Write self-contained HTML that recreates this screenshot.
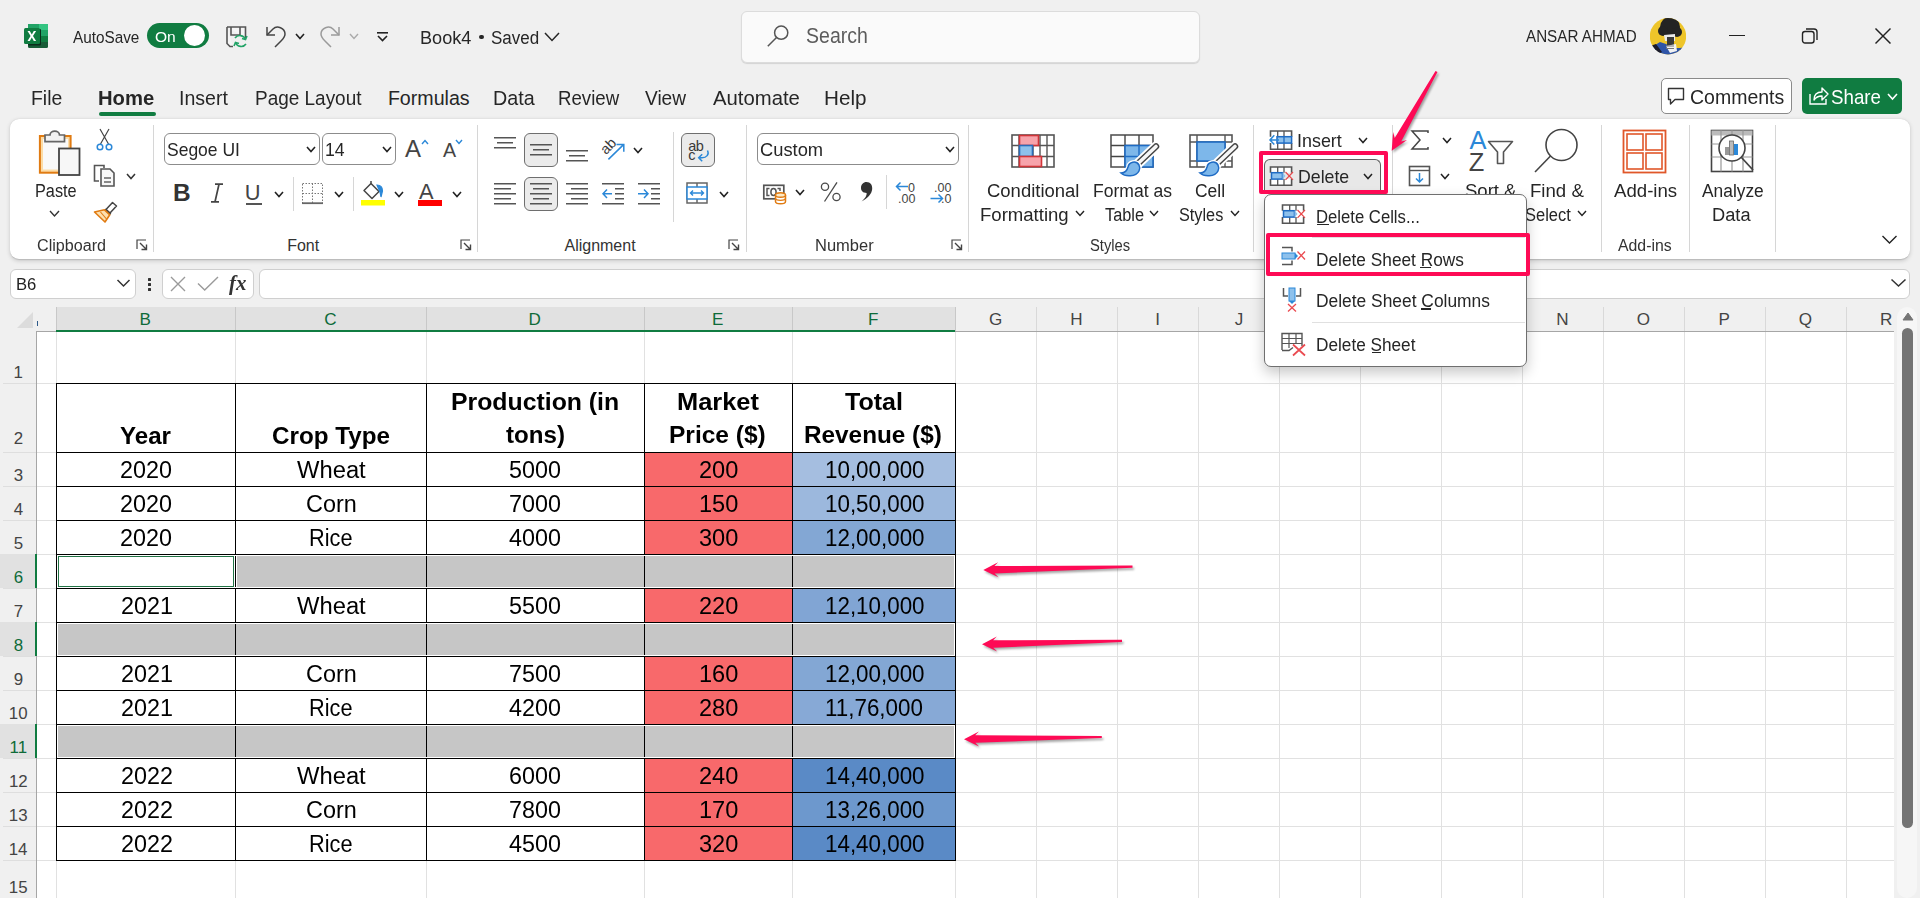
<!DOCTYPE html><html><head><meta charset="utf-8"><style>
html,body{margin:0;padding:0}
body{width:1920px;height:898px;overflow:hidden;position:relative;background:#f0f0f0;font-family:"Liberation Sans", sans-serif}
.t{position:absolute;white-space:nowrap;line-height:1;}
svg{display:block}
</style></head><body>
<svg style="position:absolute;left:23px;top:23px;overflow:visible" width="27" height="26" viewBox="0 0 27 26">
<rect x="5" y="1" width="20" height="24" rx="1.5" fill="#185c37"/>
<rect x="16" y="1" width="9" height="6" fill="#33c481"/>
<rect x="5" y="1" width="11" height="6" fill="#21a366"/>
<rect x="16" y="7" width="9" height="6" fill="#21a366"/>
<rect x="16" y="13" width="9" height="6" fill="#107c41"/>
<rect x="5" y="7" width="11" height="12" fill="#107c41"/>
<rect x="5" y="6" width="13" height="16.5" rx="1" fill="#0b2d1c"/>
<rect x="1" y="5" width="16" height="16" rx="1.5" fill="#107c41"/>
<path d="M4.5,8 L7.6,13 L4.5,18 L6.8,18 L8.8,14.6 L10.8,18 L13.1,18 L10,13 L13.1,8 L10.8,8 L8.8,11.4 L6.8,8 Z" fill="#fff"/>
</svg>
<div class="t" style="left:73.26px;top:29.11px;font-size:16.29px;letter-spacing:0.000px;color:#262626;transform:scaleX(0.9401);transform-origin:0 0;">AutoSave</div>
<div style="position:absolute;left:147px;top:23px;width:62px;height:25px;background:#107c41;border-radius:13px"></div>
<div style="position:absolute;left:183.5px;top:25px;width:21px;height:21px;background:#fff;border-radius:50%"></div>
<div class="t" style="left:154.76px;top:28.77px;font-size:15.27px;letter-spacing:0.000px;color:#fff;transform:scaleX(1.0197);transform-origin:0 0;">On</div>
<svg style="position:absolute;left:226px;top:26px;overflow:visible" width="24" height="23" viewBox="0 0 24 23">
<path d="M1,1 H19.5 V12 M1,1 V17.5 L4,20.5 H7" fill="#f5f5f5" stroke="#555" stroke-width="1.6"/>
<path d="M5,1 V9 H14 V1" fill="none" stroke="#555" stroke-width="1.6"/>
<path d="M19.5,13.5 a6,6 0 0 0 -10.5,-1.5" fill="none" stroke="#21a366" stroke-width="1.6"/>
<path d="M21,10 l-1.5,3.5 l-3.5,-1" fill="none" stroke="#21a366" stroke-width="1.6"/>
<path d="M9.5,16.5 a6,6 0 0 0 10.5,1.5" fill="none" stroke="#21a366" stroke-width="1.6"/>
<path d="M8,20 l1.5,-3.5 l3.5,1" fill="none" stroke="#21a366" stroke-width="1.6"/>
</svg>
<svg style="position:absolute;left:265px;top:25px;overflow:visible" width="22" height="24" viewBox="0 0 22 24">
<path d="M2,2 V10 H10" fill="none" stroke="#444" stroke-width="1.5"/>
<path d="M2,10 L8,4 C12,0 20,3 20,9 C20,12 18,14 16,16 L10,22" fill="none" stroke="#444" stroke-width="1.5"/>
</svg>
<svg style="position:absolute;left:294.2px;top:32.25px;overflow:visible" width="12" height="8.5" viewBox="0 0 12 8.5"><polyline points="2,2 6.0,6.5 10,2" fill="none" stroke="#222" stroke-width="1.6"/></svg>
<svg style="position:absolute;left:319px;top:25px;overflow:visible" width="22" height="24" viewBox="0 0 22 24">
<path d="M20,2 V10 H12" fill="none" stroke="#9a9a9a" stroke-width="1.5"/>
<path d="M20,10 L14,4 C10,0 2,3 2,9 C2,12 4,14 6,16 L12,22" fill="none" stroke="#9a9a9a" stroke-width="1.5"/>
</svg>
<svg style="position:absolute;left:348.2px;top:32.25px;overflow:visible" width="12" height="8.5" viewBox="0 0 12 8.5"><polyline points="2,2 6.0,6.5 10,2" fill="none" stroke="#aaa" stroke-width="1.4"/></svg>
<svg style="position:absolute;left:376px;top:31px;overflow:visible" width="13" height="11" viewBox="0 0 13 11">
<rect x="1" y="1" width="11" height="1.6" fill="#222"/>
<polyline points="2,5 6.5,9.5 11,5" fill="none" stroke="#222" stroke-width="1.6"/>
</svg>
<div class="t" style="left:420.30px;top:28.34px;font-size:19.20px;letter-spacing:0.000px;color:#262626;transform:scaleX(0.9442);transform-origin:0 0;">Book4</div>
<div style="position:absolute;left:479.2px;top:34.6px;width:4.6px;height:4.6px;background:#262626;border-radius:50%"></div>
<div class="t" style="left:490.73px;top:28.34px;font-size:19.20px;letter-spacing:0.000px;color:#262626;transform:scaleX(0.8860);transform-origin:0 0;">Saved</div>
<svg style="position:absolute;left:543.2px;top:30.65px;overflow:visible" width="18" height="11.5" viewBox="0 0 18 11.5"><polyline points="2,2 9.0,9.5 16,2" fill="none" stroke="#262626" stroke-width="1.5"/></svg>
<div style="position:absolute;left:741px;top:11px;width:457px;height:50px;background:#fafafa;border:1px solid #dcdcdc;border-radius:6px;box-shadow:0 1px 1px rgba(0,0,0,0.12)"></div>
<svg style="position:absolute;left:766px;top:24px;overflow:visible" width="24" height="24" viewBox="0 0 24 24">
<circle cx="15.2" cy="8.7" r="6.6" fill="none" stroke="#555" stroke-width="1.5"/>
<line x1="10.5" y1="13.5" x2="1.8" y2="22.3" stroke="#555" stroke-width="1.5"/>
</svg>
<div class="t" style="left:806.02px;top:25.03px;font-size:21.82px;letter-spacing:0.000px;color:#5c5c5c;transform:scaleX(0.8949);transform-origin:0 0;">Search</div>
<div class="t" style="left:1525.66px;top:28.71px;font-size:16.87px;letter-spacing:0.000px;color:#262626;transform:scaleX(0.9017);transform-origin:0 0;">ANSAR AHMAD</div>
<svg style="position:absolute;left:1650px;top:17.5px" width="36" height="37" viewBox="0 0 36 37">
<defs><clipPath id="av"><circle cx="18" cy="18.3" r="18.2"/></clipPath></defs>
<g clip-path="url(#av)">
<rect width="36" height="37" fill="#eec52a"/>
<path d="M0,30 L10,24 L16,26 L22,30 L30,30 L36,29 V37 H0 Z" fill="#2f55a8"/>
<path d="M0,28 L6,26 L12,34 L8,37 H0 Z" fill="#1c1c2a"/>
<circle cx="20" cy="9" r="10" fill="#232323"/>
<circle cx="13" cy="13" r="5" fill="#232323"/>
<circle cx="27" cy="14" r="5" fill="#232323"/>
<path d="M14,17 L25,16 L25,23 L15,23 Z" fill="#e9e9e9"/>
<rect x="17" y="19" width="7" height="9" fill="#3a3a3a"/>
<path d="M16,28 L26,26 L27,33 L20,35 Z" fill="#f2f2f2"/>
<path d="M16,28 L24,28 M16,30.5 L24,30.5" stroke="#777" stroke-width="1"/>
</g></svg>
<div style="position:absolute;left:1729px;top:34.5px;width:15.5px;height:1.8px;background:#222"></div>
<svg style="position:absolute;left:1801px;top:27px;overflow:visible" width="18" height="18" viewBox="0 0 18 18">
<rect x="1.5" y="4.5" width="11.5" height="11.5" rx="2.5" fill="none" stroke="#222" stroke-width="1.4"/>
<path d="M5,2 H13 a3,3 0 0 1 3,3 V13" fill="none" stroke="#222" stroke-width="1.4"/>
</svg>
<svg style="position:absolute;left:1874px;top:27px;overflow:visible" width="18" height="18" viewBox="0 0 18 18">
<line x1="1.5" y1="1.5" x2="16.5" y2="16.5" stroke="#222" stroke-width="1.5"/>
<line x1="16.5" y1="1.5" x2="1.5" y2="16.5" stroke="#222" stroke-width="1.5"/>
</svg>
<div class="t" style="left:31.30px;top:89.07px;font-size:19.64px;letter-spacing:0.000px;color:#262626;transform:scaleX(0.9877);transform-origin:0 0;">File</div>
<div class="t" style="left:98.43px;top:89.07px;font-size:19.64px;letter-spacing:0.000px;color:#262626;font-weight:bold;transform:scaleX(1.0309);transform-origin:0 0;">Home</div>
<div class="t" style="left:178.59px;top:89.07px;font-size:19.64px;letter-spacing:0.000px;color:#262626;transform:scaleX(0.9952);transform-origin:0 0;">Insert</div>
<div class="t" style="left:255.34px;top:89.07px;font-size:19.64px;letter-spacing:0.000px;color:#262626;transform:scaleX(0.9660);transform-origin:0 0;">Page Layout</div>
<div class="t" style="left:387.88px;top:89.07px;font-size:19.64px;letter-spacing:0.000px;color:#262626;">Formulas</div>
<div class="t" style="left:492.67px;top:89.07px;font-size:19.64px;letter-spacing:0.000px;color:#262626;transform:scaleX(1.0047);transform-origin:0 0;">Data</div>
<div class="t" style="left:557.76px;top:89.07px;font-size:19.64px;letter-spacing:0.000px;color:#262626;transform:scaleX(0.9501);transform-origin:0 0;">Review</div>
<div class="t" style="left:644.90px;top:89.07px;font-size:19.64px;letter-spacing:0.000px;color:#262626;transform:scaleX(0.9723);transform-origin:0 0;">View</div>
<div class="t" style="left:712.65px;top:89.07px;font-size:19.64px;letter-spacing:0.000px;color:#262626;transform:scaleX(1.0342);transform-origin:0 0;">Automate</div>
<div class="t" style="left:823.59px;top:89.07px;font-size:19.64px;letter-spacing:0.000px;color:#262626;transform:scaleX(1.0541);transform-origin:0 0;">Help</div>
<div style="position:absolute;left:99px;top:112px;width:57px;height:3.5px;background:#107c41;border-radius:2px"></div>
<div style="position:absolute;left:1661px;top:78px;width:131px;height:36px;background:#fff;border:1px solid #8a8a8a;border-radius:5px;box-sizing:border-box"></div>
<svg style="position:absolute;left:1667px;top:87px;overflow:visible" width="20" height="19" viewBox="0 0 20 19">
<path d="M1.5,1.5 H16.5 V12.5 H8 L3.5,17 V12.5 H1.5 Z" fill="none" stroke="#333" stroke-width="1.4" stroke-linejoin="round"/>
</svg>
<div class="t" style="left:1689.73px;top:87.39px;font-size:20.80px;letter-spacing:0.000px;color:#262626;transform:scaleX(0.9372);transform-origin:0 0;">Comments</div>
<div style="position:absolute;left:1802px;top:78px;width:100px;height:36px;background:#107c41;border-radius:5px"></div>
<svg style="position:absolute;left:1808px;top:85px;overflow:visible" width="22" height="22" viewBox="0 0 22 22">
<path d="M2,9 V19 H18 V14" fill="none" stroke="#fff" stroke-width="1.4"/>
<path d="M6,15 C6,9 9,7 14,7 V3 L20,9 L14,15 V11 C10,11 8,12 6,15 Z" fill="none" stroke="#fff" stroke-width="1.4" stroke-linejoin="round"/>
</svg>
<div class="t" style="left:1830.86px;top:87.39px;font-size:20.80px;letter-spacing:0.000px;color:#fff;transform:scaleX(0.9000);transform-origin:0 0;">Share</div>
<svg style="position:absolute;left:1885.5px;top:92.0px;overflow:visible" width="13" height="9" viewBox="0 0 13 9"><polyline points="2,2 6.5,7 11,2" fill="none" stroke="#fff" stroke-width="1.6"/></svg>
<div style="position:absolute;left:10px;top:119px;width:1900px;height:140px;background:#fff;border-radius:9px;box-shadow:0 1.5px 4px rgba(0,0,0,0.16),0 0.5px 1px rgba(0,0,0,0.12)"></div>
<svg style="position:absolute;left:37px;top:129px;overflow:visible" width="44" height="48" viewBox="0 0 44 48">
<rect x="2.9" y="7" width="30.7" height="36.7" fill="#fcdca6" stroke="#e07b12" stroke-width="2"/>
<rect x="6" y="10" width="25" height="30.5" fill="#f9f9f9"/>
<path d="M8,12.7 V6 H13 C13,0.8 22.5,0.8 22.5,6 H27.5 V12.7 Z" fill="#f2f2f2" stroke="#666" stroke-width="1.7"/>
<rect x="22" y="19.5" width="20.5" height="26.5" fill="#f7f7f7" stroke="#444" stroke-width="1.8"/>
</svg>
<div class="t" style="left:34.66px;top:182.43px;font-size:18.04px;letter-spacing:0.000px;color:#262626;transform:scaleX(0.9012);transform-origin:0 0;">Paste</div>
<svg style="position:absolute;left:47.8px;top:209.0px;overflow:visible" width="13" height="9" viewBox="0 0 13 9"><polyline points="2,2 6.5,7 11,2" fill="none" stroke="#333" stroke-width="1.4"/></svg>
<svg style="position:absolute;left:95px;top:128px;overflow:visible" width="20" height="24" viewBox="0 0 20 24">
<path d="M5,1 L13.5,16 M14,1 L5.5,16" stroke="#444" stroke-width="1.2" fill="none"/>
<circle cx="5" cy="19" r="2.8" fill="none" stroke="#2b88d8" stroke-width="1.5"/>
<circle cx="14" cy="19" r="2.8" fill="none" stroke="#2b88d8" stroke-width="1.5"/>
</svg>
<svg style="position:absolute;left:93px;top:164px;overflow:visible" width="24" height="24" viewBox="0 0 24 24">
<path d="M7,1.5 H1.5 V17 H6" fill="none" stroke="#555" stroke-width="1.6"/>
<path d="M7,1.5 H11 V4" fill="none" stroke="#555" stroke-width="1.6"/>
<path d="M8,5 H17 L21,9 V22 H8 Z" fill="#f7f7f7" stroke="#555" stroke-width="1.6"/>
<path d="M11,14 H18 M11,18 H18" stroke="#666" stroke-width="1.3"/>
</svg>
<svg style="position:absolute;left:125.19999999999999px;top:172.25px;overflow:visible" width="12" height="8.5" viewBox="0 0 12 8.5"><polyline points="2,2 6.0,6.5 10,2" fill="none" stroke="#333" stroke-width="1.5"/></svg>
<svg style="position:absolute;left:93px;top:201px;overflow:visible" width="25" height="22" viewBox="0 0 25 22">
<path d="M19.5,1.5 L23.5,5 L17,12 L13,8.5 Z" fill="#fff" stroke="#444" stroke-width="1.5" stroke-linejoin="round"/>
<path d="M12,8.5 L17.5,13.5" stroke="#444" stroke-width="2.4"/>
<path d="M1.5,11 L11.5,8.8 L16.8,13.8 L12,21 Z" fill="#fde0b0" stroke="#e07b12" stroke-width="1.6" stroke-linejoin="round"/>
<path d="M7.5,11 L13.5,18" stroke="#e07b12" stroke-width="1.1"/>
</svg>
<div class="t" style="left:37.49px;top:238.15px;font-size:16.00px;letter-spacing:0.000px;color:#333;transform:scaleX(1.0078);transform-origin:0 0;">Clipboard</div>
<svg style="position:absolute;left:136px;top:239px;overflow:visible" width="12" height="12" viewBox="0 0 12 12"><path d="M1,10 V1 H10" fill="none" stroke="#444" stroke-width="1.2"/>
<path d="M4,4 L10.5,10.5 M5.5,10.5 H10.5 V5.5" fill="none" stroke="#444" stroke-width="1.4"/></svg>
<div style="position:absolute;left:153px;top:125px;width:1px;height:127px;background:#d6d6d6"></div>
<div style="position:absolute;left:164px;top:133px;width:156px;height:32px;border:1px solid #8c8c8c;border-radius:6px;box-sizing:border-box;background:#fff"></div>
<div class="t" style="left:166.71px;top:140.69px;font-size:18.91px;letter-spacing:0.000px;color:#262626;transform:scaleX(0.9246);transform-origin:0 0;">Segoe UI</div>
<svg style="position:absolute;left:305.0px;top:145.05px;overflow:visible" width="12" height="8.5" viewBox="0 0 12 8.5"><polyline points="2,2 6.0,6.5 10,2" fill="none" stroke="#222" stroke-width="1.6"/></svg>
<div style="position:absolute;left:322px;top:133px;width:74px;height:32px;border:1px solid #8c8c8c;border-radius:6px;box-sizing:border-box;background:#fff"></div>
<div class="t" style="left:324.87px;top:141.18px;font-size:18.33px;letter-spacing:0.000px;color:#262626;transform:scaleX(0.9640);transform-origin:0 0;">14</div>
<svg style="position:absolute;left:381.3px;top:145.05px;overflow:visible" width="12" height="8.5" viewBox="0 0 12 8.5"><polyline points="2,2 6.0,6.5 10,2" fill="none" stroke="#222" stroke-width="1.6"/></svg>
<div class="t" style="left:404.94px;top:137.38px;font-size:24.00px;letter-spacing:0.000px;color:#444;">A</div>
<svg style="position:absolute;left:421px;top:139px;overflow:visible" width="8" height="6" viewBox="0 0 8 6"><polyline points="1,5 4,1.5 7,5" fill="none" stroke="#2b88d8" stroke-width="1.4"/></svg>
<div class="t" style="left:442.95px;top:141.07px;font-size:19.64px;letter-spacing:0.000px;color:#444;">A</div>
<svg style="position:absolute;left:455px;top:139px;overflow:visible" width="8" height="6" viewBox="0 0 8 6"><polyline points="1,1 4,4.5 7,1" fill="none" stroke="#2b88d8" stroke-width="1.4"/></svg>
<div class="t" style="left:173.05px;top:181.01px;font-size:24.44px;letter-spacing:0.000px;color:#333;font-weight:bold;">B</div>
<svg style="position:absolute;left:209px;top:183px;overflow:visible" width="16" height="20" viewBox="0 0 16 20"><path d="M6,1.2 H14 M2,18.8 H10 M10,1.2 L6,18.8" fill="none" stroke="#444" stroke-width="1.7"/></svg>
<div class="t" style="left:244.81px;top:181.73px;font-size:21.82px;letter-spacing:0.000px;color:#444;">U</div>
<div style="position:absolute;left:245.5px;top:203px;width:16px;height:1.6px;background:#555"></div>
<svg style="position:absolute;left:273.0px;top:190.25px;overflow:visible" width="12" height="8.5" viewBox="0 0 12 8.5"><polyline points="2,2 6.0,6.5 10,2" fill="none" stroke="#222" stroke-width="1.6"/></svg>
<div style="position:absolute;left:293px;top:177px;width:1px;height:34px;background:#d6d6d6"></div>
<svg style="position:absolute;left:301px;top:182px;overflow:visible" width="23" height="23" viewBox="0 0 23 23">
<path d="M1.5,1.5 H21.5 V21.5 H1.5 Z M11.5,1.5 V21.5 M1.5,11.5 H21.5" fill="none" stroke="#777" stroke-width="1" stroke-dasharray="1.5,1.5"/>
<path d="M1,21.2 H22" stroke="#666" stroke-width="1.8"/>
</svg>
<svg style="position:absolute;left:333.0px;top:190.25px;overflow:visible" width="12" height="8.5" viewBox="0 0 12 8.5"><polyline points="2,2 6.0,6.5 10,2" fill="none" stroke="#222" stroke-width="1.6"/></svg>
<div style="position:absolute;left:353px;top:177px;width:1px;height:34px;background:#d6d6d6"></div>
<svg style="position:absolute;left:360px;top:180px;overflow:visible" width="28" height="28" viewBox="0 0 28 28">
<path d="M4,10.5 L11,3.5 L19,11.5 L12,18.5 Z" fill="#fff" stroke="#444" stroke-width="1.5" stroke-linejoin="round"/>
<path d="M11,3.5 V1" stroke="#444" stroke-width="1.5"/>
<path d="M17,5 C21,5 22.5,8 22.5,11 L21,17 L20,12 Z" fill="#2b88d8" stroke="#2b88d8" stroke-width="1.2"/>
<rect x="1" y="20" width="24" height="5.5" fill="#ffff00"/>
</svg>
<svg style="position:absolute;left:393.0px;top:190.25px;overflow:visible" width="12" height="8.5" viewBox="0 0 12 8.5"><polyline points="2,2 6.0,6.5 10,2" fill="none" stroke="#222" stroke-width="1.6"/></svg>
<div class="t" style="left:418.95px;top:180.73px;font-size:21.82px;letter-spacing:0.000px;color:#444;">A</div>
<div style="position:absolute;left:418px;top:200px;width:24px;height:5.5px;background:#ff0000"></div>
<svg style="position:absolute;left:450.5px;top:190.25px;overflow:visible" width="12" height="8.5" viewBox="0 0 12 8.5"><polyline points="2,2 6.0,6.5 10,2" fill="none" stroke="#222" stroke-width="1.6"/></svg>
<div class="t" style="left:287.18px;top:238.15px;font-size:16.00px;letter-spacing:0.000px;color:#333;">Font</div>
<svg style="position:absolute;left:460px;top:239px;overflow:visible" width="12" height="12" viewBox="0 0 12 12"><path d="M1,10 V1 H10" fill="none" stroke="#444" stroke-width="1.2"/>
<path d="M4,4 L10.5,10.5 M5.5,10.5 H10.5 V5.5" fill="none" stroke="#444" stroke-width="1.4"/></svg>
<div style="position:absolute;left:477px;top:125px;width:1px;height:127px;background:#d6d6d6"></div>
<svg style="position:absolute;left:494px;top:137px;overflow:visible" width="24" height="24" viewBox="0 0 24 24"><rect x="0" y="0" width="22" height="1.5" fill="#555"/><rect x="3" y="5" width="16" height="1.5" fill="#555"/><rect x="0" y="10" width="22" height="1.5" fill="#555"/></svg>
<div style="position:absolute;left:524px;top:133px;width:34px;height:34px;background:#ebebeb;border:1px solid #6e6e6e;border-radius:6px;box-sizing:border-box"></div>
<svg style="position:absolute;left:530px;top:144px;overflow:visible" width="24" height="24" viewBox="0 0 24 24"><rect x="0" y="0" width="22" height="1.5" fill="#555"/><rect x="3" y="5" width="16" height="1.5" fill="#555"/><rect x="0" y="10" width="22" height="1.5" fill="#555"/></svg>
<svg style="position:absolute;left:566px;top:150px;overflow:visible" width="24" height="24" viewBox="0 0 24 24"><rect x="0" y="0" width="22" height="1.5" fill="#555"/><rect x="3" y="5" width="16" height="1.5" fill="#555"/><rect x="0" y="10" width="22" height="1.5" fill="#555"/></svg>
<svg style="position:absolute;left:600px;top:136px;overflow:visible" width="28" height="28" viewBox="0 0 28 28">
<text x="0" y="15" transform="rotate(-45 8 10)" font-family="Liberation Sans" font-size="14.5" fill="#3a3a3a">ab</text>
<path d="M8.4,23.4 L23.8,8.4 M16.5,8.4 H23.8 V15.7" fill="none" stroke="#2b88d8" stroke-width="1.5"/>
</svg>
<svg style="position:absolute;left:631.5px;top:146.25px;overflow:visible" width="12" height="8.5" viewBox="0 0 12 8.5"><polyline points="2,2 6.0,6.5 10,2" fill="none" stroke="#222" stroke-width="1.6"/></svg>
<svg style="position:absolute;left:494px;top:183px;overflow:visible" width="24" height="24" viewBox="0 0 24 24"><rect x="0" y="0" width="22" height="1.5" fill="#555"/><rect x="0" y="5" width="17" height="1.5" fill="#555"/><rect x="0" y="10" width="22" height="1.5" fill="#555"/><rect x="0" y="15" width="17" height="1.5" fill="#555"/><rect x="0" y="20" width="22" height="1.5" fill="#555"/></svg>
<div style="position:absolute;left:524px;top:177px;width:34px;height:34px;background:#ebebeb;border:1px solid #6e6e6e;border-radius:6px;box-sizing:border-box"></div>
<svg style="position:absolute;left:530px;top:183px;overflow:visible" width="24" height="24" viewBox="0 0 24 24"><rect x="0" y="0" width="22" height="1.5" fill="#555"/><rect x="3" y="5" width="16" height="1.5" fill="#555"/><rect x="0" y="10" width="22" height="1.5" fill="#555"/><rect x="3" y="15" width="16" height="1.5" fill="#555"/><rect x="0" y="20" width="22" height="1.5" fill="#555"/></svg>
<svg style="position:absolute;left:566px;top:183px;overflow:visible" width="24" height="24" viewBox="0 0 24 24"><rect x="0" y="0" width="22" height="1.5" fill="#555"/><rect x="5" y="5" width="17" height="1.5" fill="#555"/><rect x="0" y="10" width="22" height="1.5" fill="#555"/><rect x="5" y="15" width="17" height="1.5" fill="#555"/><rect x="0" y="20" width="22" height="1.5" fill="#555"/></svg>
<svg style="position:absolute;left:602px;top:183px;overflow:visible" width="24" height="24" viewBox="0 0 24 24">
<rect x="0" y="0" width="22" height="1.5" fill="#555"/><rect x="13" y="5" width="9" height="1.5" fill="#555"/>
<rect x="13" y="10" width="9" height="1.5" fill="#555"/><rect x="13" y="15" width="9" height="1.5" fill="#555"/>
<rect x="0" y="20" width="22" height="1.5" fill="#555"/>
<path d="M10,10.7 H1 M5,6.5 L1,10.7 L5,15" fill="none" stroke="#2b88d8" stroke-width="1.5"/>
</svg>
<svg style="position:absolute;left:638px;top:183px;overflow:visible" width="24" height="24" viewBox="0 0 24 24">
<rect x="0" y="0" width="22" height="1.5" fill="#555"/><rect x="13" y="5" width="9" height="1.5" fill="#555"/>
<rect x="13" y="10" width="9" height="1.5" fill="#555"/><rect x="13" y="15" width="9" height="1.5" fill="#555"/>
<rect x="0" y="20" width="22" height="1.5" fill="#555"/>
<path d="M0,10.7 H10 M6,6.5 L10,10.7 L6,15" fill="none" stroke="#2b88d8" stroke-width="1.5"/>
</svg>
<div style="position:absolute;left:673px;top:132px;width:1px;height:90px;background:#d6d6d6"></div>
<div style="position:absolute;left:681px;top:133px;width:34px;height:34px;background:#ebebeb;border:1px solid #6e6e6e;border-radius:6px;box-sizing:border-box"></div>
<svg style="position:absolute;left:686px;top:137px;overflow:visible" width="26" height="28" viewBox="0 0 26 28">
<text x="2.3" y="13.5" font-family="Liberation Sans" font-size="14.5" fill="#3a3a3a" letter-spacing="-0.6">ab</text>
<text x="2.3" y="23" font-family="Liberation Sans" font-size="14.5" fill="#3a3a3a">c</text>
<path d="M21.5,13.5 C23.5,17.5 20.5,20.8 16,20.8 H13 M16.2,17.3 L12.7,20.8 L16.2,24.3" fill="none" stroke="#2b88d8" stroke-width="1.5"/>
</svg>
<svg style="position:absolute;left:686px;top:182px;overflow:visible" width="24" height="24" viewBox="0 0 24 24">
<rect x="1" y="1" width="20" height="20" fill="none" stroke="#666" stroke-width="1.5"/>
<path d="M11,1 V21" stroke="#666" stroke-width="1.5"/>
<rect x="1" y="5" width="20" height="12" fill="#fff" stroke="#2b88d8" stroke-width="1.5"/>
<path d="M4.5,11 H17.5 M7,8.5 L4.5,11 L7,13.5 M15,8.5 L17.5,11 L15,13.5" fill="none" stroke="#2b88d8" stroke-width="1.4"/>
</svg>
<svg style="position:absolute;left:718.0px;top:190.25px;overflow:visible" width="12" height="8.5" viewBox="0 0 12 8.5"><polyline points="2,2 6.0,6.5 10,2" fill="none" stroke="#222" stroke-width="1.6"/></svg>
<div class="t" style="left:564.46px;top:238.15px;font-size:16.00px;letter-spacing:0.000px;color:#333;">Alignment</div>
<svg style="position:absolute;left:728px;top:239px;overflow:visible" width="12" height="12" viewBox="0 0 12 12"><path d="M1,10 V1 H10" fill="none" stroke="#444" stroke-width="1.2"/>
<path d="M4,4 L10.5,10.5 M5.5,10.5 H10.5 V5.5" fill="none" stroke="#444" stroke-width="1.4"/></svg>
<div style="position:absolute;left:746px;top:125px;width:1px;height:127px;background:#d6d6d6"></div>
<div style="position:absolute;left:757px;top:133px;width:202px;height:32px;border:1px solid #8c8c8c;border-radius:6px;box-sizing:border-box;background:#fff"></div>
<div class="t" style="left:759.58px;top:140.69px;font-size:18.91px;letter-spacing:0.000px;color:#262626;transform:scaleX(0.9688);transform-origin:0 0;">Custom</div>
<svg style="position:absolute;left:944.0px;top:145.05px;overflow:visible" width="12" height="8.5" viewBox="0 0 12 8.5"><polyline points="2,2 6.0,6.5 10,2" fill="none" stroke="#222" stroke-width="1.6"/></svg>
<svg style="position:absolute;left:762px;top:183px;overflow:visible" width="28" height="24" viewBox="0 0 28 24">
<rect x="1.8" y="2.3" width="20" height="13.5" fill="#fff" stroke="#555" stroke-width="1.7"/>
<path d="M7.5,5.5 H5 V12.5 H7.5" fill="none" stroke="#555" stroke-width="1.5"/>
<ellipse cx="11.5" cy="9" rx="2.6" ry="3.5" fill="none" stroke="#555" stroke-width="1.5"/>
<path d="M15.5,5.5 H18 V8" fill="none" stroke="#555" stroke-width="1.5"/>
<path d="M13.5,12 V18.5 C13.5,21.5 23.5,21.5 23.5,18.5 V12" fill="#fff" stroke="#e07b12" stroke-width="1.5"/>
<ellipse cx="18.5" cy="12" rx="5" ry="2.3" fill="#fde9c4" stroke="#e07b12" stroke-width="1.5"/>
<path d="M13.5,15.3 C13.5,18 23.5,18 23.5,15.3" fill="none" stroke="#e07b12" stroke-width="1.3"/>
</svg>
<svg style="position:absolute;left:794.0px;top:187.75px;overflow:visible" width="12" height="8.5" viewBox="0 0 12 8.5"><polyline points="2,2 6.0,6.5 10,2" fill="none" stroke="#222" stroke-width="1.6"/></svg>
<svg style="position:absolute;left:818px;top:181px;overflow:visible" width="26" height="24" viewBox="0 0 26 24">
<circle cx="7" cy="5.8" r="3.6" fill="none" stroke="#4a4a4a" stroke-width="1.3"/>
<circle cx="18.5" cy="16" r="3.6" fill="none" stroke="#4a4a4a" stroke-width="1.3"/>
<path d="M19,1.3 L6.5,20.5" stroke="#4a4a4a" stroke-width="1.3"/>
</svg>
<svg style="position:absolute;left:858px;top:180px;overflow:visible" width="18" height="24" viewBox="0 0 18 24">
<path d="M8.5,2 C12.5,2 14.5,5 14.2,9 C13.8,14 9.5,18.5 3.5,21.5 C7.5,18 8.8,15.5 8.6,13 C5,13 3,11 3,7.8 C3,4.5 5.3,2 8.5,2 Z" fill="#333"/>
</svg>
<div style="position:absolute;left:886px;top:175px;width:1px;height:34px;background:#d6d6d6"></div>
<svg style="position:absolute;left:894px;top:179px;overflow:visible" width="26" height="26" viewBox="0 0 26 26">
<path d="M2.5,7.5 H14 M6.5,3.5 L2.5,7.5 L6.5,11.5" fill="none" stroke="#2b88d8" stroke-width="1.5"/>
<text x="14" y="12.5" font-family="Liberation Sans" font-size="12.5" fill="#444">0</text>
<text x="4" y="23.5" font-family="Liberation Sans" font-size="12.5" fill="#444">.00</text>
</svg>
<svg style="position:absolute;left:929px;top:179px;overflow:visible" width="26" height="26" viewBox="0 0 26 26">
<text x="5" y="12.5" font-family="Liberation Sans" font-size="12.5" fill="#444">.00</text>
<path d="M1.5,19.5 H13.5 M9.5,15.5 L13.5,19.5 L9.5,23.5" fill="none" stroke="#2b88d8" stroke-width="1.5"/>
<text x="12" y="23.5" font-family="Liberation Sans" font-size="12.5" fill="#444">.0</text>
</svg>
<div class="t" style="left:814.64px;top:238.15px;font-size:16.00px;letter-spacing:0.000px;color:#333;transform:scaleX(1.0304);transform-origin:0 0;">Number</div>
<svg style="position:absolute;left:951px;top:239px;overflow:visible" width="12" height="12" viewBox="0 0 12 12"><path d="M1,10 V1 H10" fill="none" stroke="#444" stroke-width="1.2"/>
<path d="M4,4 L10.5,10.5 M5.5,10.5 H10.5 V5.5" fill="none" stroke="#444" stroke-width="1.4"/></svg>
<div style="position:absolute;left:968px;top:125px;width:1px;height:127px;background:#d6d6d6"></div>
<svg style="position:absolute;left:1011px;top:134px;overflow:visible" width="45" height="35" viewBox="0 0 45 35">
<rect x="1" y="1" width="42" height="32" fill="#fff" stroke="#555" stroke-width="1.6"/>
<path d="M1,11.5 H43 M1,22.5 H43 M8,1 V33 M22,1 V33 M29,1 V33 M36,1 V33" stroke="#555" stroke-width="1.4"/>
<rect x="8.5" y="1.5" width="19" height="10" fill="#f7a3ab" stroke="#d13438" stroke-width="1.6"/>
<rect x="8.5" y="11.5" width="13" height="11" fill="#8ec1ec" stroke="#2b6cb8" stroke-width="1.6"/>
<rect x="8.5" y="22.5" width="22" height="10" fill="#f7a3ab" stroke="#d13438" stroke-width="1.6"/>
</svg>
<div class="t" style="left:987.48px;top:182.31px;font-size:18.18px;letter-spacing:0.000px;color:#262626;transform:scaleX(1.0162);transform-origin:0 0;">Conditional</div>
<div class="t" style="left:980.47px;top:206.31px;font-size:18.18px;letter-spacing:0.000px;color:#262626;transform:scaleX(1.0210);transform-origin:0 0;">Formatting</div>
<svg style="position:absolute;left:1074.0px;top:209.25px;overflow:visible" width="12" height="8.5" viewBox="0 0 12 8.5"><polyline points="2,2 6.0,6.5 10,2" fill="none" stroke="#222" stroke-width="1.4"/></svg>
<svg style="position:absolute;left:1110px;top:134px;overflow:visible" width="48" height="44" viewBox="0 0 48 44">
<rect x="1" y="1" width="42" height="32" fill="#fff" stroke="#555" stroke-width="1.6"/>
<path d="M1,11.5 H43 M1,22.5 H43 M15,1 V33 M29,1 V33" stroke="#444" stroke-width="1.4"/>
<rect x="15" y="11.5" width="28" height="21.5" fill="#7db7ea" stroke="#1e6bc4" stroke-width="1.6"/>
<path d="M29,11.5 V33 M15,22.5 H43" stroke="#1e6bc4" stroke-width="1.4"/>
<path d="M46,12.5 L27,30.5" stroke="#fff" stroke-width="10" stroke-linecap="round"/>
<path d="M46,12.5 L28,29.5" stroke="#444" stroke-width="6.5" stroke-linecap="round"/>
<path d="M46,12.5 L28,29.5" stroke="#f7f7f7" stroke-width="3.6" stroke-linecap="round"/>
<path d="M29,31 C26,26 19,28 18,33 C17,37 14,39 11,39 C15,43 26,43 29,37 C30,35 30,33 29,31 Z" fill="#7db7ea" stroke="#fff" stroke-width="4"/>
<path d="M29,31 C26,26 19,28 18,33 C17,37 14,39 11,39 C15,43 26,43 29,37 C30,35 30,33 29,31 Z" fill="#7db7ea" stroke="#1e6bc4" stroke-width="1.5"/>
</svg>
<div class="t" style="left:1092.55px;top:182.31px;font-size:18.18px;letter-spacing:0.000px;color:#262626;transform:scaleX(0.9663);transform-origin:0 0;">Format as</div>
<div class="t" style="left:1104.63px;top:206.31px;font-size:18.18px;letter-spacing:0.000px;color:#262626;transform:scaleX(0.8989);transform-origin:0 0;">Table</div>
<svg style="position:absolute;left:1148.0px;top:209.25px;overflow:visible" width="12" height="8.5" viewBox="0 0 12 8.5"><polyline points="2,2 6.0,6.5 10,2" fill="none" stroke="#222" stroke-width="1.4"/></svg>
<svg style="position:absolute;left:1189px;top:134px;overflow:visible" width="48" height="44" viewBox="0 0 48 44">
<rect x="1" y="1" width="42" height="32" fill="#fff" stroke="#555" stroke-width="1.6"/>
<path d="M1,8 H43 M1,27 H43 M8,1 V33 M36,1 V33" stroke="#555" stroke-width="1.4"/>
<rect x="8" y="8" width="28" height="19" fill="#7db7ea" stroke="#1e6bc4" stroke-width="1.6"/>
<path d="M46,12.5 L27,30.5" stroke="#fff" stroke-width="10" stroke-linecap="round"/>
<path d="M46,12.5 L28,29.5" stroke="#444" stroke-width="6.5" stroke-linecap="round"/>
<path d="M46,12.5 L28,29.5" stroke="#f7f7f7" stroke-width="3.6" stroke-linecap="round"/>
<path d="M29,31 C26,26 19,28 18,33 C17,37 14,39 11,39 C15,43 26,43 29,37 C30,35 30,33 29,31 Z" fill="#7db7ea" stroke="#fff" stroke-width="4"/>
<path d="M29,31 C26,26 19,28 18,33 C17,37 14,39 11,39 C15,43 26,43 29,37 C30,35 30,33 29,31 Z" fill="#7db7ea" stroke="#1e6bc4" stroke-width="1.5"/>
</svg>
<div class="t" style="left:1195.13px;top:182.31px;font-size:18.18px;letter-spacing:0.000px;color:#262626;transform:scaleX(0.9595);transform-origin:0 0;">Cell</div>
<div class="t" style="left:1179.27px;top:206.31px;font-size:18.18px;letter-spacing:0.000px;color:#262626;transform:scaleX(0.8950);transform-origin:0 0;">Styles</div>
<svg style="position:absolute;left:1229.0px;top:209.25px;overflow:visible" width="12" height="8.5" viewBox="0 0 12 8.5"><polyline points="2,2 6.0,6.5 10,2" fill="none" stroke="#222" stroke-width="1.4"/></svg>
<div class="t" style="left:1090.34px;top:238.15px;font-size:16.00px;letter-spacing:0.000px;color:#333;transform:scaleX(0.9224);transform-origin:0 0;">Styles</div>
<div style="position:absolute;left:1253px;top:125px;width:1px;height:127px;background:#d6d6d6"></div>
<svg style="position:absolute;left:1269px;top:130px;overflow:visible" width="25" height="21" viewBox="0 0 25 21"><path d="M1.5,6.7 V1 H22.6 V6.7 M1.5,13.1 V19.2 H22.6 V13.1" fill="#fff" stroke="#555" stroke-width="1.6"/>
<path d="M8.7,1 V6.7 M15,1 V6.7 M8.7,13.1 V19.2 M15,13.1 V19.2" stroke="#555" stroke-width="1.3"/><rect x="8" y="6.7" width="14.6" height="6.4" fill="#8ec1ec" stroke="#1e6bc4" stroke-width="1.5"/>
<path d="M15,6.7 V13.1" stroke="#1e6bc4" stroke-width="1.3"/>
<path d="M1,9.9 H10 M5.3,5.2 L1,9.9 L5.3,14.6" fill="none" stroke="#2b88d8" stroke-width="1.5"/></svg>
<div class="t" style="left:1297.34px;top:131.98px;font-size:18.33px;letter-spacing:0.000px;color:#262626;transform:scaleX(0.9776);transform-origin:0 0;">Insert</div>
<svg style="position:absolute;left:1356.5px;top:136.25px;overflow:visible" width="12" height="8.5" viewBox="0 0 12 8.5"><polyline points="2,2 6.0,6.5 10,2" fill="none" stroke="#222" stroke-width="1.5"/></svg>
<div style="position:absolute;left:1264px;top:159px;width:117px;height:34px;background:#e8e8e8;border:1px solid #5f5f5f;border-bottom:none;border-radius:6px 6px 0 0;box-sizing:border-box"></div>
<svg style="position:absolute;left:1269px;top:166px;overflow:visible" width="25" height="21" viewBox="0 0 25 21"><path d="M1.5,6.7 V1 H22.6 V6.7 M1.5,13.1 V19.2 H22.6 V13.1" fill="#fff" stroke="#555" stroke-width="1.6"/>
<path d="M8.7,1 V6.7 M15,1 V6.7 M8.7,13.1 V19.2 M15,13.1 V19.2" stroke="#555" stroke-width="1.3"/><rect x="2.5" y="6.7" width="11" height="6.4" fill="#8ec1ec" stroke="#1e6bc4" stroke-width="1.5"/>
<path d="M13.5,6.2 L16.5,9.9 L13.5,13.6 Z" fill="#8ec1ec"/>
<path d="M16.5,6 L24,13.8 M24,6 L16.5,13.8" stroke="#e8474a" stroke-width="1.2"/></svg>
<div class="t" style="left:1297.54px;top:168.18px;font-size:18.33px;letter-spacing:0.000px;color:#262626;transform:scaleX(0.9669);transform-origin:0 0;">Delete</div>
<svg style="position:absolute;left:1362.0px;top:171.75px;overflow:visible" width="12" height="8.5" viewBox="0 0 12 8.5"><polyline points="2,2 6.0,6.5 10,2" fill="none" stroke="#222" stroke-width="1.5"/></svg>
<div style="position:absolute;left:1392px;top:125px;width:1px;height:127px;background:#d6d6d6"></div>
<svg style="position:absolute;left:1410px;top:129px;overflow:visible" width="20" height="22" viewBox="0 0 20 22"><path d="M18,4 V2 H2 L10,11 L2,20 H18 V18" fill="none" stroke="#444" stroke-width="1.5"/></svg>
<svg style="position:absolute;left:1440.5px;top:136.25px;overflow:visible" width="12" height="8.5" viewBox="0 0 12 8.5"><polyline points="2,2 6.0,6.5 10,2" fill="none" stroke="#222" stroke-width="1.5"/></svg>
<svg style="position:absolute;left:1408px;top:165px;overflow:visible" width="24" height="24" viewBox="0 0 24 24">
<rect x="1.5" y="1.5" width="20" height="19" fill="#fff" stroke="#555" stroke-width="1.6"/>
<path d="M1.5,5.5 H21.5" stroke="#555" stroke-width="1.4"/>
<path d="M11.5,8 V17 M8,13.5 L11.5,17 L15,13.5" fill="none" stroke="#2b88d8" stroke-width="1.5"/>
</svg>
<svg style="position:absolute;left:1438.5px;top:172.25px;overflow:visible" width="12" height="8.5" viewBox="0 0 12 8.5"><polyline points="2,2 6.0,6.5 10,2" fill="none" stroke="#222" stroke-width="1.5"/></svg>
<div class="t" style="left:1469.44px;top:128.15px;font-size:25.45px;letter-spacing:0.000px;color:#2b88d8;">A</div>
<div class="t" style="left:1468.67px;top:150.15px;font-size:25.45px;letter-spacing:0.000px;color:#444;">Z</div>
<svg style="position:absolute;left:1487px;top:140px;overflow:visible" width="28" height="26" viewBox="0 0 28 26"><path d="M1.5,1.5 H25.5 L16.5,12 V23.5 H10.5 V12 Z" fill="#fff" stroke="#555" stroke-width="1.6" stroke-linejoin="round"/></svg>
<div class="t" style="left:1464.77px;top:182.31px;font-size:18.18px;letter-spacing:0.000px;color:#262626;transform:scaleX(1.0191);transform-origin:0 0;">Sort &</div>
<svg style="position:absolute;left:1533px;top:129px;overflow:visible" width="48" height="46" viewBox="0 0 48 46">
<circle cx="28.5" cy="16" r="15.5" fill="none" stroke="#444" stroke-width="1.6"/>
<path d="M17.5,27 L2,43" stroke="#444" stroke-width="1.6"/>
</svg>
<div class="t" style="left:1529.96px;top:182.31px;font-size:18.18px;letter-spacing:0.000px;color:#262626;transform:scaleX(1.0242);transform-origin:0 0;">Find &</div>
<div class="t" style="left:1525.26px;top:206.31px;font-size:18.18px;letter-spacing:0.000px;color:#262626;transform:scaleX(0.9074);transform-origin:0 0;">Select</div>
<svg style="position:absolute;left:1576.0px;top:209.25px;overflow:visible" width="12" height="8.5" viewBox="0 0 12 8.5"><polyline points="2,2 6.0,6.5 10,2" fill="none" stroke="#222" stroke-width="1.4"/></svg>
<div style="position:absolute;left:1601px;top:125px;width:1px;height:127px;background:#d6d6d6"></div>
<svg style="position:absolute;left:1622px;top:129px;overflow:visible" width="46" height="46" viewBox="0 0 46 46">
<rect x="1.5" y="1.5" width="42" height="42" fill="#fff" stroke="#e0572a" stroke-width="1.8"/>
<rect x="5" y="5" width="16" height="16" fill="#fff" stroke="#e0572a" stroke-width="1.6"/>
<rect x="24" y="5" width="16" height="16" fill="#fff" stroke="#e0572a" stroke-width="1.6"/>
<rect x="5" y="24" width="16" height="16" fill="#fff" stroke="#e0572a" stroke-width="1.6"/>
<rect x="24" y="24" width="16" height="16" fill="#fff" stroke="#e0572a" stroke-width="1.6"/>
</svg>
<div class="t" style="left:1613.95px;top:182.31px;font-size:18.18px;letter-spacing:0.000px;color:#262626;transform:scaleX(1.0254);transform-origin:0 0;">Add-ins</div>
<div class="t" style="left:1617.96px;top:238.15px;font-size:16.00px;letter-spacing:0.000px;color:#333;transform:scaleX(0.9881);transform-origin:0 0;">Add-ins</div>
<div style="position:absolute;left:1689px;top:125px;width:1px;height:127px;background:#d6d6d6"></div>
<svg style="position:absolute;left:1710px;top:129px;overflow:visible" width="46" height="46" viewBox="0 0 46 46">
<rect x="1.5" y="1.5" width="41" height="41" fill="#fff" stroke="#444" stroke-width="1.6"/>
<rect x="1.5" y="1.5" width="41" height="5" fill="#bbb"/>
<path d="M1.5,15 H42.5 M1.5,28 H42.5 M11,1.5 V42.5 M22,1.5 V42.5 M33,1.5 V42.5" stroke="#999" stroke-width="1.2"/>
<circle cx="22" cy="19" r="13" fill="#fff" stroke="#444" stroke-width="1.6"/>
<rect x="15" y="18" width="4" height="8" fill="#999"/>
<rect x="19.5" y="12" width="4" height="14" fill="#bbb" stroke="#666" stroke-width="0.8"/>
<rect x="24" y="15" width="4" height="11" fill="#2b88d8"/>
<path d="M31,28 L43,41" stroke="#444" stroke-width="1.8"/>
</svg>
<div class="t" style="left:1701.96px;top:182.31px;font-size:18.18px;letter-spacing:0.000px;color:#262626;transform:scaleX(0.9552);transform-origin:0 0;">Analyze</div>
<div class="t" style="left:1712.49px;top:206.31px;font-size:18.18px;letter-spacing:0.000px;color:#262626;transform:scaleX(1.0037);transform-origin:0 0;">Data</div>
<div style="position:absolute;left:1775px;top:125px;width:1px;height:127px;background:#d6d6d6"></div>
<svg style="position:absolute;left:1881px;top:234px;overflow:visible" width="17" height="12" viewBox="0 0 17 12"><polyline points="1.5,2 8.5,9 15.5,2" fill="none" stroke="#222" stroke-width="1.4"/></svg>
<div style="position:absolute;left:10px;top:269px;width:126px;height:30px;background:#fff;border:1px solid #cfcfcf;border-radius:6px;box-sizing:border-box"></div>
<div class="t" style="left:16.32px;top:276.81px;font-size:16.87px;letter-spacing:0.000px;color:#222;transform:scaleX(0.9882);transform-origin:0 0;">B6</div>
<svg style="position:absolute;left:116px;top:278px;overflow:visible" width="16" height="12" viewBox="0 0 16 12"><polyline points="1.5,2 7.5,8 13.5,2" fill="none" stroke="#333" stroke-width="1.5"/></svg>
<div style="position:absolute;left:148px;top:278.0px;width:3.2px;height:3.2px;background:#333;border-radius:0.5px"></div>
<div style="position:absolute;left:148px;top:283.0px;width:3.2px;height:3.2px;background:#333;border-radius:0.5px"></div>
<div style="position:absolute;left:148px;top:288.0px;width:3.2px;height:3.2px;background:#333;border-radius:0.5px"></div>
<div style="position:absolute;left:162px;top:269px;width:92px;height:30px;background:#fff;border:1px solid #cfcfcf;border-radius:6px;box-sizing:border-box"></div>
<svg style="position:absolute;left:169px;top:275px;overflow:visible" width="20" height="18" viewBox="0 0 20 18"><path d="M2,2 L16,16 M16,2 L2,16" stroke="#9a9a9a" stroke-width="1.4"/></svg>
<svg style="position:absolute;left:197px;top:275px;overflow:visible" width="24" height="18" viewBox="0 0 24 18"><polyline points="1,8.5 7.7,15 21,2" fill="none" stroke="#9a9a9a" stroke-width="1.4"/></svg>
<div class="t" style="left:228.63px;top:271.57px;font-size:22.00px;letter-spacing:0.000px;color:#333;font-weight:bold;transform:scaleX(0.9486);transform-origin:0 0;font-family:&quot;Liberation Serif&quot;,serif;font-style:italic;">fx</div>
<div style="position:absolute;left:259px;top:269px;width:1651px;height:30px;background:#fff;border:1px solid #cfcfcf;border-radius:6px;box-sizing:border-box"></div>
<svg style="position:absolute;left:1890px;top:278px;overflow:visible" width="17" height="10" viewBox="0 0 17 10"><polyline points="1.5,1.5 8.5,8 15.5,1.5" fill="none" stroke="#333" stroke-width="1.5"/></svg>
<div style="position:absolute;left:37px;top:331px;width:1857px;height:567px;background:#fff"></div>
<svg style="position:absolute;left:0;top:0" width="1920" height="898"><rect x="56" y="331" width="1" height="567" fill="#e1e1e1"/><rect x="235" y="331" width="1" height="567" fill="#e1e1e1"/><rect x="426" y="331" width="1" height="567" fill="#e1e1e1"/><rect x="644" y="331" width="1" height="567" fill="#e1e1e1"/><rect x="792" y="331" width="1" height="567" fill="#e1e1e1"/><rect x="955" y="331" width="1" height="567" fill="#e1e1e1"/><rect x="1036" y="331" width="1" height="567" fill="#e1e1e1"/><rect x="1117" y="331" width="1" height="567" fill="#e1e1e1"/><rect x="1198" y="331" width="1" height="567" fill="#e1e1e1"/><rect x="1279" y="331" width="1" height="567" fill="#e1e1e1"/><rect x="1360" y="331" width="1" height="567" fill="#e1e1e1"/><rect x="1441" y="331" width="1" height="567" fill="#e1e1e1"/><rect x="1522" y="331" width="1" height="567" fill="#e1e1e1"/><rect x="1603" y="331" width="1" height="567" fill="#e1e1e1"/><rect x="1684" y="331" width="1" height="567" fill="#e1e1e1"/><rect x="1765" y="331" width="1" height="567" fill="#e1e1e1"/><rect x="1846" y="331" width="1" height="567" fill="#e1e1e1"/><rect x="37" y="383" width="1857" height="1" fill="#e1e1e1"/><rect x="37" y="452" width="1857" height="1" fill="#e1e1e1"/><rect x="37" y="486" width="1857" height="1" fill="#e1e1e1"/><rect x="37" y="520" width="1857" height="1" fill="#e1e1e1"/><rect x="37" y="554" width="1857" height="1" fill="#e1e1e1"/><rect x="37" y="588" width="1857" height="1" fill="#e1e1e1"/><rect x="37" y="622" width="1857" height="1" fill="#e1e1e1"/><rect x="37" y="656" width="1857" height="1" fill="#e1e1e1"/><rect x="37" y="690" width="1857" height="1" fill="#e1e1e1"/><rect x="37" y="724" width="1857" height="1" fill="#e1e1e1"/><rect x="37" y="758" width="1857" height="1" fill="#e1e1e1"/><rect x="37" y="792" width="1857" height="1" fill="#e1e1e1"/><rect x="37" y="826" width="1857" height="1" fill="#e1e1e1"/><rect x="37" y="860" width="1857" height="1" fill="#e1e1e1"/></svg>
<div style="position:absolute;left:56px;top:307px;width:899px;height:24px;background:#e1e1e1"></div>
<div style="position:absolute;left:56px;top:307px;width:1px;height:24px;background:#c8c8c8"></div>
<div style="position:absolute;left:235px;top:307px;width:1px;height:24px;background:#c8c8c8"></div>
<div style="position:absolute;left:426px;top:307px;width:1px;height:24px;background:#c8c8c8"></div>
<div style="position:absolute;left:644px;top:307px;width:1px;height:24px;background:#c8c8c8"></div>
<div style="position:absolute;left:792px;top:307px;width:1px;height:24px;background:#c8c8c8"></div>
<div style="position:absolute;left:955px;top:307px;width:1px;height:24px;background:#c8c8c8"></div>
<div style="position:absolute;left:1036px;top:307px;width:1px;height:24px;background:#d9d9d9"></div>
<div style="position:absolute;left:1117px;top:307px;width:1px;height:24px;background:#d9d9d9"></div>
<div style="position:absolute;left:1198px;top:307px;width:1px;height:24px;background:#d9d9d9"></div>
<div style="position:absolute;left:1279px;top:307px;width:1px;height:24px;background:#d9d9d9"></div>
<div style="position:absolute;left:1360px;top:307px;width:1px;height:24px;background:#d9d9d9"></div>
<div style="position:absolute;left:1441px;top:307px;width:1px;height:24px;background:#d9d9d9"></div>
<div style="position:absolute;left:1522px;top:307px;width:1px;height:24px;background:#d9d9d9"></div>
<div style="position:absolute;left:1603px;top:307px;width:1px;height:24px;background:#d9d9d9"></div>
<div style="position:absolute;left:1684px;top:307px;width:1px;height:24px;background:#d9d9d9"></div>
<div style="position:absolute;left:1765px;top:307px;width:1px;height:24px;background:#d9d9d9"></div>
<div style="position:absolute;left:1846px;top:307px;width:1px;height:24px;background:#d9d9d9"></div>
<div style="position:absolute;left:955px;top:331px;width:939px;height:1px;background:#a6a6a6"></div>
<div style="position:absolute;left:56px;top:330px;width:899px;height:2px;background:#107c41"></div>
<div class="t" style="left:139.54px;top:311.23px;font-size:17.09px;letter-spacing:0.000px;color:#0e6b39;">B</div>
<div class="t" style="left:324.24px;top:311.23px;font-size:17.09px;letter-spacing:0.000px;color:#0e6b39;">C</div>
<div class="t" style="left:528.53px;top:311.23px;font-size:17.09px;letter-spacing:0.000px;color:#0e6b39;">D</div>
<div class="t" style="left:711.95px;top:311.23px;font-size:17.09px;letter-spacing:0.000px;color:#0e6b39;">E</div>
<div class="t" style="left:867.92px;top:311.23px;font-size:17.09px;letter-spacing:0.000px;color:#0e6b39;">F</div>
<div class="t" style="left:989.07px;top:311.23px;font-size:17.09px;letter-spacing:0.000px;color:#444;">G</div>
<div class="t" style="left:1070.33px;top:311.23px;font-size:17.09px;letter-spacing:0.000px;color:#444;">H</div>
<div class="t" style="left:1155.13px;top:311.23px;font-size:17.09px;letter-spacing:0.000px;color:#444;">I</div>
<div class="t" style="left:1234.74px;top:311.23px;font-size:17.09px;letter-spacing:0.000px;color:#444;">J</div>
<div class="t" style="left:1313.20px;top:311.23px;font-size:17.09px;letter-spacing:0.000px;color:#444;">K</div>
<div class="t" style="left:1395.33px;top:311.23px;font-size:17.09px;letter-spacing:0.000px;color:#444;">L</div>
<div class="t" style="left:1474.39px;top:311.23px;font-size:17.09px;letter-spacing:0.000px;color:#444;">M</div>
<div class="t" style="left:1556.33px;top:311.23px;font-size:17.09px;letter-spacing:0.000px;color:#444;">N</div>
<div class="t" style="left:1636.86px;top:311.23px;font-size:17.09px;letter-spacing:0.000px;color:#444;">O</div>
<div class="t" style="left:1718.54px;top:311.23px;font-size:17.09px;letter-spacing:0.000px;color:#444;">P</div>
<div class="t" style="left:1798.86px;top:311.23px;font-size:17.09px;letter-spacing:0.000px;color:#444;">Q</div>
<div class="t" style="left:1880.03px;top:311.23px;font-size:17.09px;letter-spacing:0.000px;color:#444;">R</div>
<div style="position:absolute;left:36px;top:331px;width:20px;height:1px;background:#a6a6a6"></div>
<div style="position:absolute;left:36.5px;top:321px;width:1.5px;height:5px;background:#2d5a8a"></div>
<svg style="position:absolute;left:17px;top:312px;overflow:visible" width="16" height="16" viewBox="0 0 16 16"><path d="M16,0 V16 H0 Z" fill="#dcdcdc"/></svg>
<div style="position:absolute;left:36px;top:331px;width:1px;height:567px;background:#a6a6a6"></div>
<div style="position:absolute;left:3px;top:383px;width:33px;height:1px;background:#dedede"></div>
<div class="t" style="left:13.59px;top:365.11px;font-size:16.87px;letter-spacing:0.000px;color:#444;">1</div>
<div style="position:absolute;left:3px;top:452px;width:33px;height:1px;background:#dedede"></div>
<div class="t" style="left:13.82px;top:431.41px;font-size:16.87px;letter-spacing:0.000px;color:#444;">2</div>
<div style="position:absolute;left:3px;top:486px;width:33px;height:1px;background:#dedede"></div>
<div class="t" style="left:13.86px;top:468.11px;font-size:16.87px;letter-spacing:0.000px;color:#444;">3</div>
<div style="position:absolute;left:3px;top:520px;width:33px;height:1px;background:#dedede"></div>
<div class="t" style="left:13.86px;top:502.11px;font-size:16.87px;letter-spacing:0.000px;color:#444;">4</div>
<div style="position:absolute;left:3px;top:554px;width:33px;height:1px;background:#dedede"></div>
<div class="t" style="left:13.82px;top:536.11px;font-size:16.87px;letter-spacing:0.000px;color:#444;">5</div>
<div style="position:absolute;left:0px;top:554px;width:35px;height:34px;background:#e1e1e1"></div>
<div style="position:absolute;left:35px;top:554px;width:2px;height:34px;background:#107c41"></div>
<div style="position:absolute;left:3px;top:588px;width:33px;height:1px;background:#dedede"></div>
<div class="t" style="left:13.75px;top:570.11px;font-size:16.87px;letter-spacing:0.000px;color:#0e6b39;">6</div>
<div style="position:absolute;left:3px;top:622px;width:33px;height:1px;background:#dedede"></div>
<div class="t" style="left:13.80px;top:604.11px;font-size:16.87px;letter-spacing:0.000px;color:#444;">7</div>
<div style="position:absolute;left:0px;top:622px;width:35px;height:34px;background:#e1e1e1"></div>
<div style="position:absolute;left:35px;top:622px;width:2px;height:34px;background:#107c41"></div>
<div style="position:absolute;left:3px;top:656px;width:33px;height:1px;background:#dedede"></div>
<div class="t" style="left:13.82px;top:638.11px;font-size:16.87px;letter-spacing:0.000px;color:#0e6b39;">8</div>
<div style="position:absolute;left:3px;top:690px;width:33px;height:1px;background:#dedede"></div>
<div class="t" style="left:13.80px;top:672.11px;font-size:16.87px;letter-spacing:0.000px;color:#444;">9</div>
<div style="position:absolute;left:3px;top:724px;width:33px;height:1px;background:#dedede"></div>
<div class="t" style="left:8.82px;top:706.11px;font-size:16.87px;letter-spacing:0.000px;color:#444;">10</div>
<div style="position:absolute;left:0px;top:724px;width:35px;height:34px;background:#e1e1e1"></div>
<div style="position:absolute;left:35px;top:724px;width:2px;height:34px;background:#107c41"></div>
<div style="position:absolute;left:3px;top:758px;width:33px;height:1px;background:#dedede"></div>
<div class="t" style="left:9.52px;top:740.11px;font-size:16.87px;letter-spacing:0.000px;color:#0e6b39;">11</div>
<div style="position:absolute;left:3px;top:792px;width:33px;height:1px;background:#dedede"></div>
<div class="t" style="left:8.92px;top:774.11px;font-size:16.87px;letter-spacing:0.000px;color:#444;">12</div>
<div style="position:absolute;left:3px;top:826px;width:33px;height:1px;background:#dedede"></div>
<div class="t" style="left:8.86px;top:808.11px;font-size:16.87px;letter-spacing:0.000px;color:#444;">13</div>
<div style="position:absolute;left:3px;top:860px;width:33px;height:1px;background:#dedede"></div>
<div class="t" style="left:8.73px;top:842.11px;font-size:16.87px;letter-spacing:0.000px;color:#444;">14</div>
<div style="position:absolute;left:3px;top:912px;width:33px;height:1px;background:#dedede"></div>
<div class="t" style="left:8.84px;top:879.91px;font-size:16.87px;letter-spacing:0.000px;color:#444;">15</div>
<div style="position:absolute;left:645px;top:453px;width:147px;height:33px;background:#f8696b"></div>
<div style="position:absolute;left:793px;top:453px;width:162px;height:33px;background:#a5bee0"></div>
<div style="position:absolute;left:645px;top:487px;width:147px;height:33px;background:#f8696b"></div>
<div style="position:absolute;left:793px;top:487px;width:162px;height:33px;background:#9cb8dd"></div>
<div style="position:absolute;left:645px;top:521px;width:147px;height:33px;background:#f8696b"></div>
<div style="position:absolute;left:793px;top:521px;width:162px;height:33px;background:#83a7d4"></div>
<div style="position:absolute;left:645px;top:589px;width:147px;height:33px;background:#f8696b"></div>
<div style="position:absolute;left:793px;top:589px;width:162px;height:33px;background:#81a5d4"></div>
<div style="position:absolute;left:645px;top:657px;width:147px;height:33px;background:#f8696b"></div>
<div style="position:absolute;left:793px;top:657px;width:162px;height:33px;background:#83a7d4"></div>
<div style="position:absolute;left:645px;top:691px;width:147px;height:33px;background:#f8696b"></div>
<div style="position:absolute;left:793px;top:691px;width:162px;height:33px;background:#87a9d6"></div>
<div style="position:absolute;left:645px;top:759px;width:147px;height:33px;background:#f8696b"></div>
<div style="position:absolute;left:793px;top:759px;width:162px;height:33px;background:#5a8ac6"></div>
<div style="position:absolute;left:645px;top:793px;width:147px;height:33px;background:#f8696b"></div>
<div style="position:absolute;left:793px;top:793px;width:162px;height:33px;background:#6d98cd"></div>
<div style="position:absolute;left:645px;top:827px;width:147px;height:33px;background:#f8696b"></div>
<div style="position:absolute;left:793px;top:827px;width:162px;height:33px;background:#5a8ac6"></div>
<svg style="position:absolute;left:0;top:0" width="1920" height="898"><rect x="56" y="383" width="900" height="1" fill="#000"/><rect x="56" y="452" width="900" height="1" fill="#000"/><rect x="56" y="486" width="900" height="1" fill="#000"/><rect x="56" y="520" width="900" height="1" fill="#000"/><rect x="56" y="554" width="900" height="1" fill="#000"/><rect x="56" y="588" width="900" height="1" fill="#000"/><rect x="56" y="622" width="900" height="1" fill="#000"/><rect x="56" y="656" width="900" height="1" fill="#000"/><rect x="56" y="690" width="900" height="1" fill="#000"/><rect x="56" y="724" width="900" height="1" fill="#000"/><rect x="56" y="758" width="900" height="1" fill="#000"/><rect x="56" y="792" width="900" height="1" fill="#000"/><rect x="56" y="826" width="900" height="1" fill="#000"/><rect x="56" y="860" width="900" height="1" fill="#000"/><rect x="56" y="383" width="1" height="478" fill="#000"/><rect x="235" y="383" width="1" height="478" fill="#000"/><rect x="426" y="383" width="1" height="478" fill="#000"/><rect x="644" y="383" width="1" height="478" fill="#000"/><rect x="792" y="383" width="1" height="478" fill="#000"/><rect x="955" y="383" width="1" height="478" fill="#000"/></svg>
<div style="position:absolute;left:57px;top:555px;width:898px;height:33px;background:#fff"></div>
<div style="position:absolute;left:58px;top:556px;width:896px;height:31px;background:#c6c6c6"></div>
<div style="position:absolute;left:57px;top:623px;width:898px;height:33px;background:#fff"></div>
<div style="position:absolute;left:58px;top:624px;width:896px;height:31px;background:#c6c6c6"></div>
<div style="position:absolute;left:57px;top:725px;width:898px;height:33px;background:#fff"></div>
<div style="position:absolute;left:58px;top:726px;width:896px;height:31px;background:#c6c6c6"></div>
<svg style="position:absolute;left:0;top:0" width="1920" height="898"><rect x="235" y="556" width="1" height="31" fill="#000"/><rect x="426" y="556" width="1" height="31" fill="#000"/><rect x="644" y="556" width="1" height="31" fill="#000"/><rect x="792" y="556" width="1" height="31" fill="#000"/><rect x="235" y="624" width="1" height="31" fill="#000"/><rect x="426" y="624" width="1" height="31" fill="#000"/><rect x="644" y="624" width="1" height="31" fill="#000"/><rect x="792" y="624" width="1" height="31" fill="#000"/><rect x="235" y="726" width="1" height="31" fill="#000"/><rect x="426" y="726" width="1" height="31" fill="#000"/><rect x="644" y="726" width="1" height="31" fill="#000"/><rect x="792" y="726" width="1" height="31" fill="#000"/></svg>
<div style="position:absolute;left:57px;top:555px;width:178px;height:33px;background:#fff"></div>
<div style="position:absolute;left:236px;top:556px;width:1px;height:31px;background:#fff"></div>
<div style="position:absolute;left:58px;top:556px;width:176px;height:31px;border:1px solid #217346;box-sizing:border-box"></div>
<div class="t" style="left:120.08px;top:424.06px;font-size:24.73px;letter-spacing:0.000px;color:#000;font-weight:bold;transform:scaleX(0.9758);transform-origin:0 0;">Year</div>
<div class="t" style="left:271.53px;top:424.06px;font-size:24.73px;letter-spacing:0.000px;color:#000;font-weight:bold;transform:scaleX(0.9799);transform-origin:0 0;">Crop Type</div>
<div class="t" style="left:451.02px;top:389.76px;font-size:24.73px;letter-spacing:0.000px;color:#000;font-weight:bold;transform:scaleX(1.0038);transform-origin:0 0;">Production (in</div>
<div class="t" style="left:505.70px;top:422.76px;font-size:24.73px;letter-spacing:0.000px;color:#000;font-weight:bold;transform:scaleX(0.9753);transform-origin:0 0;">tons)</div>
<div class="t" style="left:677.18px;top:389.76px;font-size:24.73px;letter-spacing:0.000px;color:#000;font-weight:bold;transform:scaleX(1.0282);transform-origin:0 0;">Market</div>
<div class="t" style="left:669.04px;top:422.76px;font-size:24.73px;letter-spacing:0.000px;color:#000;font-weight:bold;transform:scaleX(0.9921);transform-origin:0 0;">Price ($)</div>
<div class="t" style="left:845.39px;top:389.76px;font-size:24.73px;letter-spacing:0.000px;color:#000;font-weight:bold;transform:scaleX(1.0126);transform-origin:0 0;">Total</div>
<div class="t" style="left:803.76px;top:422.76px;font-size:24.73px;letter-spacing:0.000px;color:#000;font-weight:bold;transform:scaleX(0.9837);transform-origin:0 0;">Revenue ($)</div>
<div class="t" style="left:120.41px;top:458.06px;font-size:24.15px;letter-spacing:0.000px;color:#000;transform:scaleX(0.9670);transform-origin:0 0;">2020</div>
<div class="t" style="left:296.66px;top:458.06px;font-size:24.15px;letter-spacing:0.000px;color:#000;transform:scaleX(0.9850);transform-origin:0 0;">Wheat</div>
<div class="t" style="left:509.02px;top:458.06px;font-size:24.15px;letter-spacing:0.000px;color:#000;transform:scaleX(0.9670);transform-origin:0 0;">5000</div>
<div class="t" style="left:698.93px;top:458.06px;font-size:24.15px;letter-spacing:0.000px;color:#000;transform:scaleX(0.9770);transform-origin:0 0;">200</div>
<div class="t" style="left:824.56px;top:458.06px;font-size:24.15px;letter-spacing:0.000px;color:#000;transform:scaleX(0.9270);transform-origin:0 0;">10,00,000</div>
<div class="t" style="left:120.41px;top:492.06px;font-size:24.15px;letter-spacing:0.000px;color:#000;transform:scaleX(0.9670);transform-origin:0 0;">2020</div>
<div class="t" style="left:305.79px;top:492.06px;font-size:24.15px;letter-spacing:0.000px;color:#000;transform:scaleX(0.9700);transform-origin:0 0;">Corn</div>
<div class="t" style="left:508.88px;top:492.06px;font-size:24.15px;letter-spacing:0.000px;color:#000;transform:scaleX(0.9670);transform-origin:0 0;">7000</div>
<div class="t" style="left:698.64px;top:492.06px;font-size:24.15px;letter-spacing:0.000px;color:#000;transform:scaleX(0.9770);transform-origin:0 0;">150</div>
<div class="t" style="left:824.56px;top:492.06px;font-size:24.15px;letter-spacing:0.000px;color:#000;transform:scaleX(0.9270);transform-origin:0 0;">10,50,000</div>
<div class="t" style="left:120.41px;top:526.06px;font-size:24.15px;letter-spacing:0.000px;color:#000;transform:scaleX(0.9670);transform-origin:0 0;">2020</div>
<div class="t" style="left:308.83px;top:526.06px;font-size:24.15px;letter-spacing:0.000px;color:#000;transform:scaleX(0.9000);transform-origin:0 0;">Rice</div>
<div class="t" style="left:509.23px;top:526.06px;font-size:24.15px;letter-spacing:0.000px;color:#000;transform:scaleX(0.9670);transform-origin:0 0;">4000</div>
<div class="t" style="left:699.08px;top:526.06px;font-size:24.15px;letter-spacing:0.000px;color:#000;transform:scaleX(0.9770);transform-origin:0 0;">300</div>
<div class="t" style="left:824.56px;top:526.06px;font-size:24.15px;letter-spacing:0.000px;color:#000;transform:scaleX(0.9270);transform-origin:0 0;">12,00,000</div>
<div class="t" style="left:120.52px;top:594.06px;font-size:24.15px;letter-spacing:0.000px;color:#000;transform:scaleX(0.9670);transform-origin:0 0;">2021</div>
<div class="t" style="left:296.66px;top:594.06px;font-size:24.15px;letter-spacing:0.000px;color:#000;transform:scaleX(0.9850);transform-origin:0 0;">Wheat</div>
<div class="t" style="left:509.02px;top:594.06px;font-size:24.15px;letter-spacing:0.000px;color:#000;transform:scaleX(0.9670);transform-origin:0 0;">5500</div>
<div class="t" style="left:698.93px;top:594.06px;font-size:24.15px;letter-spacing:0.000px;color:#000;transform:scaleX(0.9770);transform-origin:0 0;">220</div>
<div class="t" style="left:824.56px;top:594.06px;font-size:24.15px;letter-spacing:0.000px;color:#000;transform:scaleX(0.9270);transform-origin:0 0;">12,10,000</div>
<div class="t" style="left:120.52px;top:662.06px;font-size:24.15px;letter-spacing:0.000px;color:#000;transform:scaleX(0.9670);transform-origin:0 0;">2021</div>
<div class="t" style="left:305.79px;top:662.06px;font-size:24.15px;letter-spacing:0.000px;color:#000;transform:scaleX(0.9700);transform-origin:0 0;">Corn</div>
<div class="t" style="left:508.88px;top:662.06px;font-size:24.15px;letter-spacing:0.000px;color:#000;transform:scaleX(0.9670);transform-origin:0 0;">7500</div>
<div class="t" style="left:698.64px;top:662.06px;font-size:24.15px;letter-spacing:0.000px;color:#000;transform:scaleX(0.9770);transform-origin:0 0;">160</div>
<div class="t" style="left:824.56px;top:662.06px;font-size:24.15px;letter-spacing:0.000px;color:#000;transform:scaleX(0.9270);transform-origin:0 0;">12,00,000</div>
<div class="t" style="left:120.52px;top:696.06px;font-size:24.15px;letter-spacing:0.000px;color:#000;transform:scaleX(0.9670);transform-origin:0 0;">2021</div>
<div class="t" style="left:308.83px;top:696.06px;font-size:24.15px;letter-spacing:0.000px;color:#000;transform:scaleX(0.9000);transform-origin:0 0;">Rice</div>
<div class="t" style="left:509.23px;top:696.06px;font-size:24.15px;letter-spacing:0.000px;color:#000;transform:scaleX(0.9670);transform-origin:0 0;">4200</div>
<div class="t" style="left:698.93px;top:696.06px;font-size:24.15px;letter-spacing:0.000px;color:#000;transform:scaleX(0.9770);transform-origin:0 0;">280</div>
<div class="t" style="left:825.40px;top:696.06px;font-size:24.15px;letter-spacing:0.000px;color:#000;transform:scaleX(0.9270);transform-origin:0 0;">11,76,000</div>
<div class="t" style="left:120.55px;top:764.06px;font-size:24.15px;letter-spacing:0.000px;color:#000;transform:scaleX(0.9670);transform-origin:0 0;">2022</div>
<div class="t" style="left:296.66px;top:764.06px;font-size:24.15px;letter-spacing:0.000px;color:#000;transform:scaleX(0.9850);transform-origin:0 0;">Wheat</div>
<div class="t" style="left:508.91px;top:764.06px;font-size:24.15px;letter-spacing:0.000px;color:#000;transform:scaleX(0.9670);transform-origin:0 0;">6000</div>
<div class="t" style="left:698.93px;top:764.06px;font-size:24.15px;letter-spacing:0.000px;color:#000;transform:scaleX(0.9770);transform-origin:0 0;">240</div>
<div class="t" style="left:824.56px;top:764.06px;font-size:24.15px;letter-spacing:0.000px;color:#000;transform:scaleX(0.9270);transform-origin:0 0;">14,40,000</div>
<div class="t" style="left:120.55px;top:798.06px;font-size:24.15px;letter-spacing:0.000px;color:#000;transform:scaleX(0.9670);transform-origin:0 0;">2022</div>
<div class="t" style="left:305.79px;top:798.06px;font-size:24.15px;letter-spacing:0.000px;color:#000;transform:scaleX(0.9700);transform-origin:0 0;">Corn</div>
<div class="t" style="left:508.88px;top:798.06px;font-size:24.15px;letter-spacing:0.000px;color:#000;transform:scaleX(0.9670);transform-origin:0 0;">7800</div>
<div class="t" style="left:698.64px;top:798.06px;font-size:24.15px;letter-spacing:0.000px;color:#000;transform:scaleX(0.9770);transform-origin:0 0;">170</div>
<div class="t" style="left:824.56px;top:798.06px;font-size:24.15px;letter-spacing:0.000px;color:#000;transform:scaleX(0.9270);transform-origin:0 0;">13,26,000</div>
<div class="t" style="left:120.55px;top:832.06px;font-size:24.15px;letter-spacing:0.000px;color:#000;transform:scaleX(0.9670);transform-origin:0 0;">2022</div>
<div class="t" style="left:308.83px;top:832.06px;font-size:24.15px;letter-spacing:0.000px;color:#000;transform:scaleX(0.9000);transform-origin:0 0;">Rice</div>
<div class="t" style="left:509.23px;top:832.06px;font-size:24.15px;letter-spacing:0.000px;color:#000;transform:scaleX(0.9670);transform-origin:0 0;">4500</div>
<div class="t" style="left:699.08px;top:832.06px;font-size:24.15px;letter-spacing:0.000px;color:#000;transform:scaleX(0.9770);transform-origin:0 0;">320</div>
<div class="t" style="left:824.56px;top:832.06px;font-size:24.15px;letter-spacing:0.000px;color:#000;transform:scaleX(0.9270);transform-origin:0 0;">14,40,000</div>
<div style="position:absolute;left:1894px;top:307px;width:26px;height:591px;background:#f0f0f0"></div>
<div style="position:absolute;left:1897px;top:307px;width:20px;height:591px;background:#f6f6f6;border-radius:10px"></div>
<svg style="position:absolute;left:1902px;top:312px;overflow:visible" width="12" height="10" viewBox="0 0 12 10"><path d="M6,1 L11,8 H1 Z" fill="#757575" stroke="#757575" stroke-width="1" stroke-linejoin="round"/></svg>
<div style="position:absolute;left:1902px;top:328px;width:11px;height:500px;background:#747474;border-radius:5.5px"></div>
<div style="position:absolute;left:1264px;top:194px;width:263px;height:173px;background:#fff;border:1px solid #6f6f6f;border-radius:7px;box-sizing:border-box;box-shadow:0 6px 14px rgba(0,0,0,0.22)"></div>
<div style="position:absolute;left:1312px;top:237px;width:213px;height:1px;background:#e0e0e0"></div>
<div style="position:absolute;left:1312px;top:322px;width:213px;height:1px;background:#e0e0e0"></div>
<div class="t" style="left:1315.62px;top:206.74px;font-size:19.20px;letter-spacing:0.000px;color:#262626;transform:scaleX(0.8691);transform-origin:0 0;">Delete Cells...</div>
<div style="position:absolute;left:1316.5px;top:223.6px;width:12.5px;height:1.2px;background:#262626"></div>
<div class="t" style="left:1315.57px;top:250.14px;font-size:19.20px;letter-spacing:0.000px;color:#262626;transform:scaleX(0.9007);transform-origin:0 0;">Delete Sheet Rows</div>
<div style="position:absolute;left:1420px;top:267px;width:11px;height:1.2px;background:#262626"></div>
<div class="t" style="left:1315.56px;top:291.44px;font-size:19.20px;letter-spacing:0.000px;color:#262626;transform:scaleX(0.9060);transform-origin:0 0;">Delete Sheet Columns</div>
<div style="position:absolute;left:1420.5px;top:308.4px;width:10.5px;height:1.2px;background:#262626"></div>
<div class="t" style="left:1315.58px;top:334.84px;font-size:19.20px;letter-spacing:0.000px;color:#262626;transform:scaleX(0.8966);transform-origin:0 0;">Delete Sheet</div>
<div style="position:absolute;left:1371.5px;top:351.8px;width:9.5px;height:1.2px;background:#262626"></div>
<svg style="position:absolute;left:1281px;top:204px;overflow:visible" width="25" height="21" viewBox="0 0 25 21"><path d="M1.5,6.7 V1 H22.6 V6.7 M1.5,13.1 V19.2 H22.6 V13.1" fill="#fff" stroke="#555" stroke-width="1.6"/>
<path d="M8.7,1 V6.7 M15,1 V6.7 M8.7,13.1 V19.2 M15,13.1 V19.2" stroke="#555" stroke-width="1.3"/><rect x="2.5" y="6.7" width="11" height="6.4" fill="#8ec1ec" stroke="#1e6bc4" stroke-width="1.5"/>
<path d="M13.5,6.2 L16.5,9.9 L13.5,13.6 Z" fill="#8ec1ec"/>
<path d="M16.5,6 L24,13.8 M24,6 L16.5,13.8" stroke="#e8474a" stroke-width="1.2"/></svg>
<svg style="position:absolute;left:1281px;top:246px;overflow:visible" width="25" height="21" viewBox="0 0 25 21"><path d="M1,1.5 H11 V5.5 M11,14.5 V18.5 H1" fill="none" stroke="#555" stroke-width="1.5"/>
<rect x="1" y="7" width="13" height="6" fill="#8ec1ec" stroke="#2b88d8" stroke-width="1"/>
<path d="M14,7 L17,10 L14,13 Z" fill="#2b88d8"/>
<path d="M16.5,5.5 L24,13.5 M24,5.5 L16.5,13.5" stroke="#ea4a50" stroke-width="1.3"/></svg>
<svg style="position:absolute;left:1282px;top:287px;overflow:visible" width="22" height="26" viewBox="0 0 22 26"><path d="M1.5,1 V9 H6 M14,9 H18.5 V1" fill="none" stroke="#555" stroke-width="1.5"/>
<rect x="7" y="1" width="6" height="13" fill="#8ec1ec" stroke="#2b88d8" stroke-width="1"/>
<path d="M7,14 L10,17 L13,14 Z" fill="#2b88d8"/>
<path d="M6,17 L14,24.5 M14,17 L6,24.5" stroke="#ea4a50" stroke-width="1.3"/></svg>
<svg style="position:absolute;left:1281px;top:332px;overflow:visible" width="26" height="25" viewBox="0 0 26 25"><path d="M1,18 V1.5 H21 V14" fill="none" stroke="#555" stroke-width="1.4"/>
<path d="M1,6.5 H21 M1,11.5 H21 M8,1.5 V16 M15,1.5 V12" stroke="#555" stroke-width="1.2"/>
<path d="M1,18.5 H8 L12,15.5" fill="none" stroke="#555" stroke-width="1.4"/>
<path d="M12,12.5 L24,23.5 M24,12.5 L12,23.5" stroke="#ea4a50" stroke-width="1.7"/></svg>
<div style="position:absolute;left:1259px;top:151px;width:129px;height:43px;border:4px solid #fe0a55;box-sizing:border-box;border-radius:2px"></div>
<div style="position:absolute;left:1266px;top:233px;width:264px;height:43px;border:4px solid #fe0a55;box-sizing:border-box;border-radius:2px"></div>
<svg style="position:absolute;left:0;top:0" width="1920" height="898"><defs><filter id="blur" x="-20%" y="-50%" width="140%" height="200%"><feGaussianBlur stdDeviation="1.2"/></filter></defs><path d="M1435.5,71.0 L1394.7,137.9 L1393.1,132.1 L1391.7,150.8 L1407.0,139.9 L1401.2,141.5 L1437.5,72.0 Z" fill="rgba(0,0,0,0.35)" transform="translate(1.5,2)" filter="url(#blur)"/><path d="M1435.5,71.0 L1394.7,137.9 L1393.1,132.1 L1391.7,150.8 L1407.0,139.9 L1401.2,141.5 L1437.5,72.0 Z" fill="#fe0a55"/><path d="M1132.5,565.6 L994.5,566.0 L998.1,562.2 L983.3,570.0 L998.5,577.2 L994.6,573.5 L1132.5,567.8 Z" fill="rgba(0,0,0,0.35)" transform="translate(1.5,2)" filter="url(#blur)"/><path d="M1132.5,565.6 L994.5,566.0 L998.1,562.2 L983.3,570.0 L998.5,577.2 L994.6,573.5 L1132.5,567.8 Z" fill="#fe0a55"/><path d="M1122.0,639.7 L993.2,640.3 L996.8,636.4 L982.0,644.3 L997.2,651.4 L993.3,647.8 L1122.0,641.9 Z" fill="rgba(0,0,0,0.35)" transform="translate(1.5,2)" filter="url(#blur)"/><path d="M1122.0,639.7 L993.2,640.3 L996.8,636.4 L982.0,644.3 L997.2,651.4 L993.3,647.8 L1122.0,641.9 Z" fill="#fe0a55"/><path d="M1101.8,735.9 L975.2,735.3 L978.9,731.5 L964.0,739.2 L979.1,746.5 L975.3,742.8 L1101.8,738.1 Z" fill="rgba(0,0,0,0.35)" transform="translate(1.5,2)" filter="url(#blur)"/><path d="M1101.8,735.9 L975.2,735.3 L978.9,731.5 L964.0,739.2 L979.1,746.5 L975.3,742.8 L1101.8,738.1 Z" fill="#fe0a55"/></svg>
</body></html>
